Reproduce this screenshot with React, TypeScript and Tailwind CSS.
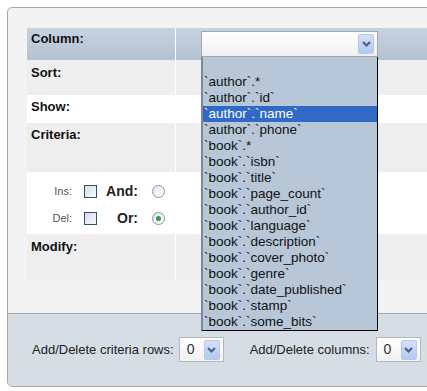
import React from "react";

const OPTIONS = [
  "",
  "`author`.*",
  "`author`.`id`",
  "`author`.`name`",
  "`author`.`phone`",
  "`book`.*",
  "`book`.`isbn`",
  "`book`.`title`",
  "`book`.`page_count`",
  "`book`.`author_id`",
  "`book`.`language`",
  "`book`.`description`",
  "`book`.`cover_photo`",
  "`book`.`genre`",
  "`book`.`date_published`",
  "`book`.`stamp`",
  "`book`.`some_bits`",
];

const SELECTED = "`author`.`name`";

function ArrowButton() {
  return (
    <div className="w-[16px] h-[20px] flex items-center justify-center rounded-[2px] border border-[#b7c8ec] bg-gradient-to-b from-[#d3e0f8] to-[#b3c8f0]">
      <svg width="9" height="6" viewBox="0 0 9 6">
        <path d="M1 1 L4.5 4.5 L8 1" fill="none" stroke="#4a5d82" strokeWidth="2" />
      </svg>
    </div>
  );
}

function SmallSelect({ value }: { value: string }) {
  return (
    <div className="w-[45px] h-[25px] flex items-center justify-between pl-[7px] pr-[3px] border border-[#b3b8bd] bg-gradient-to-b from-white to-[#f2f2f2] text-[14px] text-[#333]">
      <span>{value}</span>
      <ArrowButton />
    </div>
  );
}

function Checkbox() {
  return (
    <div className="w-[13px] h-[13px] border border-[#2c4f71] bg-gradient-to-br from-[#d9dee6] to-[#f7f8fa]" />
  );
}

function Radio({ checked }: { checked?: boolean }) {
  return (
    <div className="w-[13px] h-[13px] rounded-full border border-[#7f93ad] bg-gradient-to-br from-[#e0e6ee] to-white flex items-center justify-center">
      {checked && <div className="w-[5px] h-[5px] rounded-full bg-[#3c9a3c]" />}
    </div>
  );
}

function LabelCell({ children, pt = "pt-1" }: { children: React.ReactNode; pt?: string }) {
  return (
    <div className={`w-[149px] shrink-0 border-r border-white pl-[4px] ${pt} font-bold text-[13px] leading-[16px] text-[#111]`}>
      {children}
    </div>
  );
}

export default function App() {
  return (
    <div className="w-[427px] h-[391px] overflow-hidden bg-white pt-[7px] pl-[7px] font-['Liberation_Sans',Arial,sans-serif]">
      <div className="w-[460px] h-[380px] rounded-l-[5px] border border-[#a9a9a9] bg-[#f3f3f3] flex flex-col overflow-hidden">
        <div className="h-[306px] shrink-0 pt-[20px] pl-[19px] border-b border-[#a6a6a6]">
          <div className="flex flex-col">
            <div className="h-[32px] flex bg-gradient-to-b from-[#c6d3e0] to-[#b3c3d3]">
              <LabelCell pt="pt-[3px]">Column:</LabelCell>
              <div className="flex-1 pl-[25px] pt-[3px]">
                <div className="relative w-[177px] h-[26px] border border-[#a3a8ad] bg-gradient-to-b from-white to-[#f0f0f0] flex items-center justify-end pr-[3px]">
                  <ArrowButton />
                  <div className="absolute left-[-1px] top-[25px] w-[177px] z-10 bg-[#b7c7d8] border-l-2 border-l-[#7d8996] border-r border-b border-r-black border-b-black pt-[1px] text-[13.5px] leading-[16px] text-[#111]">
                    {OPTIONS.map((o, i) => (
                      <div
                        key={i}
                        className={
                          o === SELECTED
                            ? "h-[16px] pl-[1px] bg-[#316ac5] text-white whitespace-nowrap"
                            : "h-[16px] pl-[1px] whitespace-nowrap"
                        }
                      >
                        {o}
                      </div>
                    ))}
                  </div>
                </div>
              </div>
            </div>
            <div className="h-[35px] flex bg-[#eeeeee]">
              <LabelCell pt="pt-[5px]">Sort:</LabelCell>
              <div className="flex-1" />
            </div>
            <div className="h-[28px] flex bg-white">
              <LabelCell>Show:</LabelCell>
              <div className="flex-1" />
            </div>
            <div className="h-[49px] flex bg-[#eeeeee]">
              <LabelCell>Criteria:</LabelCell>
              <div className="flex-1" />
            </div>
            <div className="h-[62px] bg-white pt-[7px] flex flex-col gap-[3px]">
              <div className="h-[24px] flex items-center">
                <div className="w-[45px] text-right text-[11px] text-[#555]">Ins:</div>
                <div className="ml-[12px]">
                  <Checkbox />
                </div>
                <div className="w-[41px] text-right font-bold text-[14px] text-[#222]">And:</div>
                <div className="ml-[14px]">
                  <Radio />
                </div>
              </div>
              <div className="h-[24px] flex items-center">
                <div className="w-[45px] text-right text-[11px] text-[#555]">Del:</div>
                <div className="ml-[12px]">
                  <Checkbox />
                </div>
                <div className="w-[41px] text-right font-bold text-[14px] text-[#222]">Or:</div>
                <div className="ml-[14px]">
                  <Radio checked />
                </div>
              </div>
            </div>
            <div className="h-[46px] flex bg-[#eeeeee]">
              <LabelCell pt="pt-[5px]">Modify:</LabelCell>
              <div className="flex-1" />
            </div>
          </div>
        </div>
        <div className="flex-1 bg-[#d6dde5] pl-[24px] pt-[23px] flex items-start text-[13px] text-[#222]">
          <div className="h-[25px] flex items-center">Add/Delete criteria rows:</div>
          <div className="ml-[5px]">
            <SmallSelect value="0" />
          </div>
          <div className="ml-[26px] h-[25px] flex items-center">Add/Delete columns:</div>
          <div className="ml-[6px]">
            <SmallSelect value="0" />
          </div>
        </div>
      </div>
    </div>
  );
}
